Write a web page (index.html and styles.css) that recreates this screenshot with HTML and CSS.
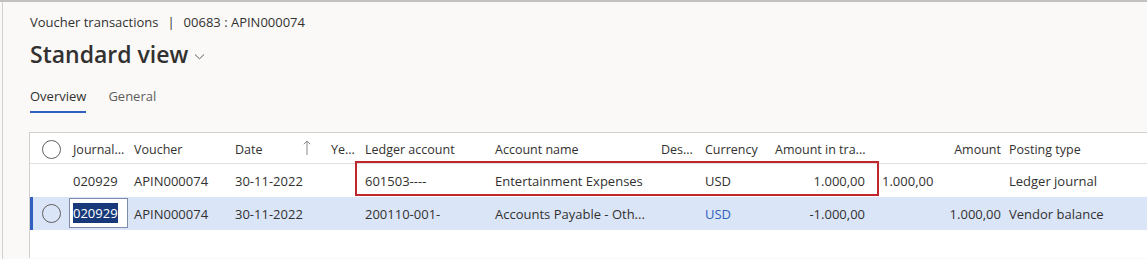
FILE: index.html
```html
<!DOCTYPE html>
<html lang="en">
<head>
    <meta charset="UTF-8">
    <title>Voucher transactions</title>
    <link rel="stylesheet" href="styles.css">
</head>
<body>
    <div class="page">
        <div class="page-header">
            <div class="breadcrumb">
                <span>Voucher transactions</span>
                <span class="sep">|</span>
                <span>00683 : APIN000074</span>
            </div>
            <h1 class="view-title">Standard view
                <svg class="chevron" width="11" height="7" viewBox="0 0 11 7">
                    <path d="M1 1.5 L5.5 5.8 L10 1.5" fill="none" stroke="#605e5c" stroke-width="1"/>
                </svg>
            </h1>
            <div class="tabs">
                <span class="tab active">Overview</span>
                <span class="tab">General</span>
            </div>
        </div>

        <div class="grid">
            <div class="grid-row head">
                <div class="cell check"><span class="radio"></span></div>
                <div class="cell">Journal...</div>
                <div class="cell">Voucher</div>
                <div class="cell sort">Date
                    <svg class="arrow" width="8" height="15" viewBox="0 0 8 15">
                        <path d="M4 1 V15 M0.8 4.2 L4 1 L7.2 4.2" fill="none" stroke="#8a8886" stroke-width="1"/>
                    </svg>
                </div>
                <div class="cell">Ye...</div>
                <div class="cell">Ledger account</div>
                <div class="cell">Account name</div>
                <div class="cell">Des...</div>
                <div class="cell">Currency</div>
                <div class="cell">Amount in tra...</div>
                <div class="cell num">Amount</div>
                <div class="cell">Posting type</div>
            </div>

            <div class="grid-row">
                <div class="cell check"></div>
                <div class="cell">020929</div>
                <div class="cell">APIN000074</div>
                <div class="cell">30-11-2022</div>
                <div class="cell"></div>
                <div class="cell">601503----</div>
                <div class="cell">Entertainment Expenses</div>
                <div class="cell"></div>
                <div class="cell">USD</div>
                <div class="cell num tra">1.000,00</div>
                <div class="cell">1.000,00</div>
                <div class="cell">Ledger journal</div>
            </div>

            <div class="grid-row selected">
                <div class="cell check"><span class="radio"></span></div>
                <div class="cell edit"><span class="edit-box"><span class="sel">020929</span></span></div>
                <div class="cell">APIN000074</div>
                <div class="cell">30-11-2022</div>
                <div class="cell"></div>
                <div class="cell">200110-001-</div>
                <div class="cell">Accounts Payable - Oth...</div>
                <div class="cell"></div>
                <div class="cell link">USD</div>
                <div class="cell num tra">-1.000,00</div>
                <div class="cell num">1.000,00</div>
                <div class="cell">Vendor balance</div>
            </div>

            <div class="highlight-box"></div>
        </div>
    </div>
</body>
</html>
```

FILE: styles.css
```css
* {
    margin: 0;
    padding: 0;
    box-sizing: border-box;
}

body {
    font-family: 'Segoe UI', 'Open Sans', sans-serif;
    background-color: #faf9f8;
    color: #323130;
    border-top: 2px solid #c3c1bf;
    height: 259px;
    overflow: hidden;
}

.page {
    margin-left: 2px;
    border-left: 1px solid #d2d0ce;
    height: 257px;
}

.page-header {
    padding-left: 27px;
    padding-top: 10px;
}

.breadcrumb {
    font-size: 13px;
    line-height: 20px;
    display: flex;
    gap: 8px;
}

.breadcrumb .sep {
    margin: 0 1px;
}

.view-title {
    font-size: 23px;
    font-weight: 600;
    line-height: 36px;
    margin-top: 4px;
    display: flex;
    align-items: center;
    gap: 6px;
}

.chevron {
    margin-top: 5px;
}

.tabs {
    display: flex;
    gap: 22px;
    margin-top: 14px;
}

.tab {
    font-size: 13px;
    line-height: 20px;
    padding-bottom: 5px;
    color: #605e5c;
    border-bottom: 2px solid transparent;
}

.tab.active {
    color: #323130;
    border-bottom-color: #2f5fbf;
}

.grid {
    position: relative;
    margin-left: 26px;
    margin-top: 19px;
    background: white;
    border-left: 1px solid #d2d0ce;
    border-top: 1px solid #d2d0ce;
    height: 126px;
}

.grid-row {
    display: grid;
    grid-template-columns: 39px 61px 101px 96px 34px 130px 166px 44px 70px 107px 127px 1fr;
    height: 33px;
    align-items: center;
    font-size: 13px;
    white-space: nowrap;
}

.grid-row.head {
    height: 31px;
    font-size: 12.5px;
    font-weight: 500;
    padding-top: 2px;
    border-bottom: 1px solid #e1dfdd;
}

.grid-row.selected {
    background: #dbe5f8;
    box-shadow: inset 3px 0 0 #2f5fbf;
}

.cell {
    padding: 0 4px;
    overflow: hidden;
}

.cell.num {
    text-align: right;
}

.cell.tra {
    padding-right: 13px;
}

.cell.link {
    color: #2f5fbf;
}

.cell.check {
    display: flex;
    justify-content: center;
    padding-left: 8px;
}

.radio {
    width: 19px;
    height: 19px;
    border: 1px solid #605e5c;
    border-radius: 50%;
}

.cell.sort {
    display: flex;
    justify-content: space-between;
    align-items: center;
}

.arrow {
    margin-right: 12px;
    margin-bottom: 3px;
}

.cell.edit {
    padding: 0 2px 0 0;
    align-self: stretch;
    display: flex;
}

.edit-box {
    display: flex;
    align-items: center;
    width: 100%;
    margin: 1px 0 2px;
    padding: 0 3px;
    background: white;
    border: 1px solid #7d8cae;
}

.sel {
    background: #17397a;
    color: white;
    line-height: 20px;
}

.highlight-box {
    position: absolute;
    left: 325px;
    top: 28px;
    width: 524px;
    height: 35px;
    border: 2px solid #c0272d;
}
```
